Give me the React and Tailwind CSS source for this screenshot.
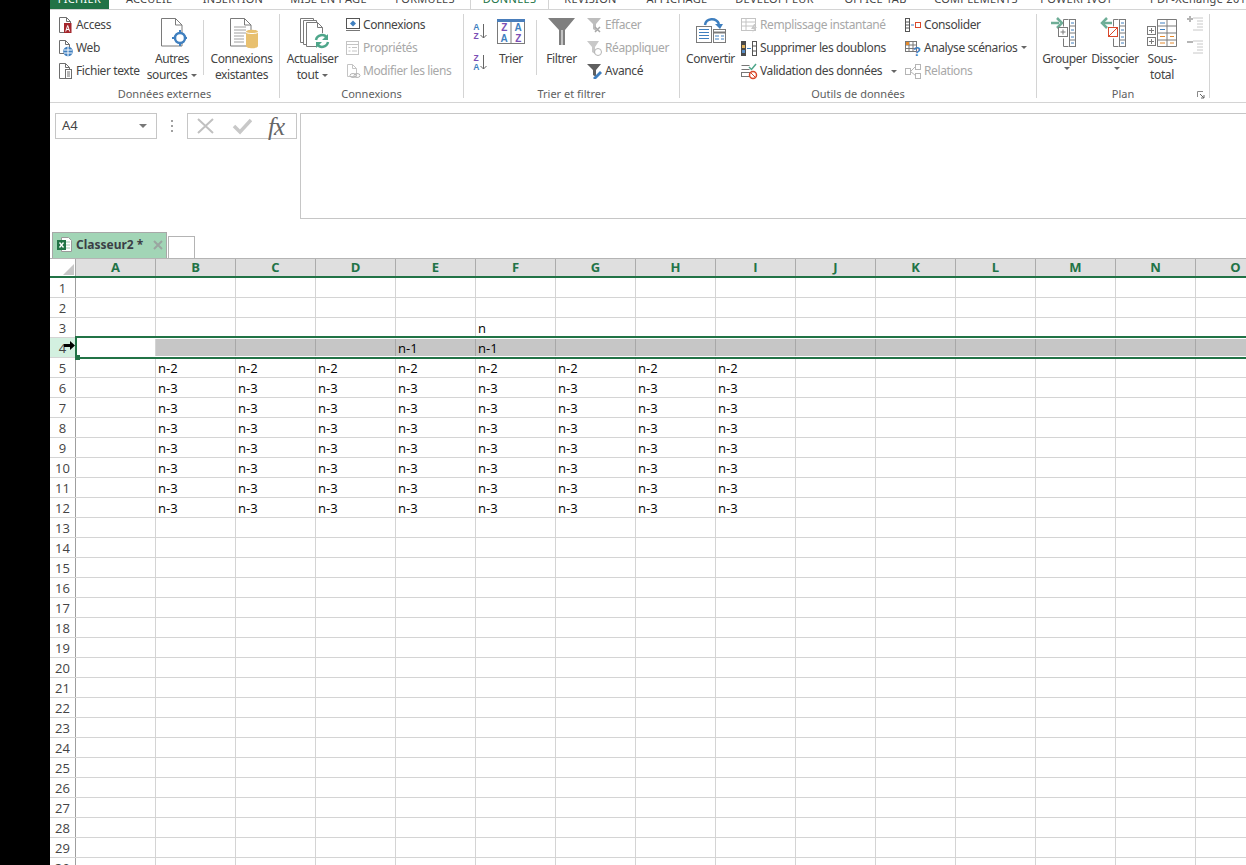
const FONT = { fontFamily: '"Noto Sans", "Open Sans", sans-serif' };

const TABS = [
  ["FICHIER", 59], ["ACCUEIL", 80], ["INSERTION", 88], ["MISE EN PAGE", 103], ["FORMULES", 90],
  ["DONNÉES", 79], ["RÉVISION", 83], ["AFFICHAGE", 90], ["DÉVELOPPEUR", 105], ["OFFICE TAB", 97],
  ["COMPLÉMENTS", 104], ["POWERPIVOT", 97], ["PDF-XChange 2012", 121],
];
const COLS = "ABCDEFGHIJKLMNO".split("");
const ROWS = Array.from({ length: 30 }, (_, i) => i + 1);

function cellText(r, c) {
  if (r === 3 && c === "F") return "n";
  if (r === 4 && (c === "E" || c === "F")) return "n-1";
  if (r >= 5 && r <= 12 && "BCDEFGHI".includes(c)) return r === 5 ? "n-2" : "n-3";
  return "";
}

const S = ({ w = 16, h = 16, children, className = "" }) => (
  <svg width={w} height={h} viewBox={`0 0 ${w} ${h}`} className={`shrink-0 ${className}`} fill="none">{children}</svg>
);

const Doc = ({ x = 0.5, y = 0.5, w = 10, h = 14, c = "#6e6e6e" }) => (
  <path d={`M${x} ${y}h${w - 4}l4 4v${h - 4}h-${w}z M${x + w - 4} ${y}v4h4`} stroke={c} fill="#fff" />
);

const IAccess = () => (<S h={18}><Doc x={1.5} y={1.5} w={11} h={15} /><rect x="6" y="7" width="7.5" height="10" fill="#a4262c" /><path d="M7.7 15.5l2-6 2 6M8.4 13.5h2.6" stroke="#fff" /></S>);
const IWeb = () => (<S h={18}><Doc x={1.5} y={1.5} w={10} h={13} /><circle cx="10" cy="12.5" r="4.8" fill="#3f7fbf" /><path d="M6 11h8M6 14h8M10 8v9" stroke="#fff" /></S>);
const IText = () => (<S h={18}><Doc x={1.5} y={1.5} w={10} h={15} /><rect x="7.5" y="7.5" width="6" height="9" fill="#fff" stroke="#6e6e6e" /><path d="M9 10h3M9 12h3M9 14h3" stroke="#6e6e6e" /></S>);
const IConn = () => (<S><rect x="1.5" y="1.5" width="13" height="10" fill="#fff" stroke="#555" /><path d="M8 3.5l3 3-3 3-3-3z" fill="#3f7fbf" /><path d="M1 13.5h14" stroke="#777" /></S>);
const IProps = () => (<S><rect x="1.5" y="1.5" width="12" height="13" stroke="#c4c4c4" /><path d="M1.5 4.5h12M3.5 7.5h2M7 7.5h5M3.5 11h2M7 11h5" stroke="#c4c4c4" /></S>);
const ILinks = () => (<S><Doc x={2.5} y={1.5} w={9} h={12} c="#c4c4c4" /><ellipse cx="8" cy="12.5" rx="3" ry="2" stroke="#b5b5b5" /><ellipse cx="12" cy="12.5" rx="3" ry="2" stroke="#b5b5b5" /></S>);
const IClear = () => (<S w={18}><path d="M1 1h14l-5 6v7l-3-2V7z" fill="#bdbdbd" /><path d="M9 10l5 5M14 10l-5 5" stroke="#a8a8a8" strokeWidth="1.5" /></S>);
const IReapply = () => (<S w={18}><path d="M1 1h12l-4 6v7l-3-2V7z" fill="#c8c8c8" /><circle cx="12" cy="12" r="3.5" stroke="#b5b5b5" /></S>);
const IAdv = () => (<S w={18}><path d="M1 1h14l-5 6v7l-3-2V7z" fill="#5f5f5f" /><path d="M7 15l7-7 2 2-7 7z" fill="#3f7fbf" /></S>);
const IFlash = () => (<S w={18}><rect x="0.5" y="1.5" width="14" height="12" stroke="#c4c4c4" /><path d="M0.5 5h14M0.5 9h14M5 1.5v12" stroke="#c4c4c4" /><path d="M13 7l-3 5h3l-2 4 5-6h-3l2-3z" fill="#c8c8c8" /></S>);
const IDup = () => (<S w={18}><rect x="0" y="1" width="5" height="15" fill="#4a4a4a" /><rect x="1" y="5" width="3" height="3" fill="#e3b35c" /><rect x="1" y="10" width="3" height="3" fill="#5a8fc7" /><rect x="11.5" y="1.5" width="4" height="14" stroke="#555" fill="#fff" /><path d="M12 6h3M12 11h3" stroke="#555" /><path d="M6 8.5h4" stroke="#3f7fbf" /></S>);
const IValid = () => (<S w={18} h={18}><path d="M0.5 3.5h8M0.5 7.5h8" stroke="#777" /><rect x="0.5" y="10.5" width="8" height="4" stroke="#777" /><path d="M8 5l2.5 2.5L15 2" stroke="#4ea68a" strokeWidth="1.5" /><circle cx="12" cy="13" r="3.5" stroke="#d9482b" strokeWidth="1.5" fill="#fff" /><path d="M9.5 10.5l5 5" stroke="#d9482b" /></S>);
const IConsol = () => (<S w={18}><rect x="0.5" y="1.5" width="4" height="13" stroke="#555" /><path d="M0.5 5h4M0.5 8h4M0.5 11h4" stroke="#555" /><path d="M6 8h3" stroke="#3f7fbf" /><rect x="10.5" y="5.5" width="5" height="5" stroke="#d9482b" /></S>);
const IScen = () => (<S w={18}><rect x="0.5" y="1.5" width="11" height="10" stroke="#777" /><path d="M0.5 5h11M0.5 8.5h11M4 1.5v10M8 1.5v10" stroke="#777" /><rect x="1" y="2" width="3" height="3" fill="#e58a2c" /><text x="8" y="16" fontSize="13" fontWeight="700" fill="#3f7fbf" fontFamily="Liberation Sans">?</text></S>);
const IRel = () => (<S w={18}><rect x="0.5" y="5.5" width="5" height="6" stroke="#b5b5b5" /><rect x="10.5" y="1.5" width="5" height="5" stroke="#b5b5b5" /><rect x="10.5" y="10.5" width="5" height="5" stroke="#b5b5b5" /><path d="M5.5 8.5l5-5M5.5 8.5l5 4" stroke="#b5b5b5" /></S>);

const Caret = ({ c = "#666" }) => <span className="inline-block align-middle ml-[4px] w-0 h-0 border-x-[3px] border-x-transparent border-t-[3px]" style={{ borderTopColor: c }} />;

const IAutres = () => (
  <S w={30} h={36}>
    <path d="M4.5 4.5h14l6.5 6.5v21h-20.5z M18.5 4.5v6.5h6.5" stroke="#7a7a7a" fill="#fff" />
    <circle cx="23" cy="24" r="5" fill="#fff" stroke="#3f7fbf" strokeWidth="2.5" />
    <path d="M15 24h4M27 24h3M23 16v4M23 28v4" stroke="#3f7fbf" strokeWidth="2" />
  </S>
);
const IExist = () => (
  <S w={34} h={36}>
    <path d="M5.5 4.5h14l6.5 6.5v21h-20.5z M19.5 4.5v6.5h6.5" stroke="#7a7a7a" fill="#fff" />
    <path d="M9 13h12M9 16h12M9 19h12M9 22h10M9 25h10M9 28h10" stroke="#a0a0a0" />
    <path d="M21 18c0-3 12-3 12 0v14c0 3-12 3-12 0z" fill="#e8c06f" />
    <path d="M21 18c0 2 12 2 12 0" stroke="#fff" />
  </S>
);
const IRefresh = () => (
  <S w={40} h={36}>
    <path d="M7.5 4.5h13v24h-13z" stroke="#7a7a7a" fill="#fff" />
    <path d="M10.5 6.5h13v24h-13z" stroke="#7a7a7a" fill="#fff" />
    <path d="M13.5 8.5h11l5 5v19h-16z M24.5 8.5v5h5" stroke="#7a7a7a" fill="#fff" />
    <circle cx="29" cy="27" r="8" fill="#fff" />
    <path d="M23 26a6 6 0 0 1 11-2M35 28a6 6 0 0 1-11 2" stroke="#4ea68a" strokeWidth="2.5" />
    <path d="M35 20v6h-6zM23 34v-6h6z" fill="#4ea68a" />
  </S>
);
const ILetters = ({ top, bottom, x, c1, c2 }) => (
  <g fontFamily="Liberation Sans" fontSize="10" fontWeight="700" textAnchor="middle">
    <text x={x} y="17" fill={c1}>{top}</text>
    <text x={x} y="28" fill={c2}>{bottom}</text>
  </g>
);
const ITrier = () => (
  <S w={30} h={36}>
    <rect x="1.5" y="5.5" width="27" height="24" stroke="#7a7a7a" fill="#fff" />
    <rect x="1" y="5" width="28" height="3" fill="#4a7ebb" />
    <path d="M15 8v21" stroke="#7a7a7a" />
    <ILetters x={8} top="Z" bottom="A" c1="#7b4fb5" c2="#3f7fbf" />
    <ILetters x={22} top="A" bottom="Z" c1="#3f7fbf" c2="#7b4fb5" />
  </S>
);
const ISort = ({ up }) => (
  <S w={17} h={20}>
    <g fontFamily="Liberation Sans" fontSize="8.5" fontWeight="700" textAnchor="middle">
      <text x="4" y="9" fill={up ? "#3f7fbf" : "#7b4fb5"}>{up ? "A" : "Z"}</text>
      <text x="4" y="18" fill={up ? "#7b4fb5" : "#3f7fbf"}>{up ? "Z" : "A"}</text>
    </g>
    <path d="M11.5 3v14M8.5 14l3 3 3-3" stroke="#666" />
  </S>
);
const IFunnel = () => (
  <S w={28} h={36}>
    <path d="M0 4h27L17 16v15h-6V16z" fill="#7f7f7f" />
    <path d="M14 16v15" stroke="#c4c4c4" strokeWidth="2" />
  </S>
);
const IConvert = () => (
  <S w={32} h={36}>
    <rect x="1.5" y="12.5" width="15" height="16" stroke="#7a7a7a" fill="#fff" />
    <path d="M4 15.5h10M4 18.5h10M4 21.5h10M4 24.5h10" stroke="#3f7fbf" />
    <rect x="18.5" y="15.5" width="12" height="13" stroke="#7a7a7a" fill="#fff" />
    <path d="M18.5 18.5h12" stroke="#7a7a7a" strokeWidth="2" />
    <path d="M20 22h4M26 22h3M20 25h4M26 25h3" stroke="#3f7fbf" />
    <path d="M10 11c1-7 11-8 14-1" stroke="#3f7fbf" strokeWidth="2.5" />
    <path d="M20 10h8l-3 5z" fill="#3f7fbf" />
  </S>
);
const ColRight = () => (
  <g>
    <rect x="16.5" y="5.5" width="6" height="27" stroke="#7a7a7a" fill="#fff" transform="translate(4 0)" />
    <path d="M20.5 12h6M20.5 19h6M20.5 26h6" stroke="#7a7a7a" />
    <path d="M22 9h3M22 16h3M22 23h3M22 29h3" stroke="#3f7fbf" />
    <path d="M19.5 5.5h-5v7M14.5 24.5v8h5" stroke="#7a7a7a" />
  </g>
);
const IGroup = () => (
  <S w={32} h={36}>
    <path d="M2 9h8" stroke="#6fae97" strokeWidth="2.5" /><path d="M8 4l5 5-5 5" stroke="#6fae97" strokeWidth="2.5" />
    <rect x="9.5" y="13.5" width="9" height="9" stroke="#7a7a7a" fill="#fff" /><path d="M11.5 18h5M14 15.5v5" stroke="#7a7a7a" />
    <ColRight />
  </S>
);
const IUngroup = () => (
  <S w={32} h={36}>
    <path d="M5 9h8" stroke="#6fae97" strokeWidth="2.5" /><path d="M8 4L3 9l5 5" stroke="#6fae97" strokeWidth="2.5" />
    <rect x="9.5" y="13.5" width="9" height="9" stroke="#d9482b" fill="#fff" /><path d="M10 22l8-8" stroke="#d9482b" />
    <ColRight />
  </S>
);
const ISubtotal = () => (
  <S w={32} h={36}>
    <path d="M11.5 5.5h19v27h-19z M11.5 12h19M11.5 19h19M11.5 26h19M21 5.5v27" stroke="#7a7a7a" />
    <rect x="1.5" y="12.5" width="8" height="8" stroke="#7a7a7a" fill="#fff" /><path d="M3 16.5h5M5.5 14v5" stroke="#7a7a7a" />
    <rect x="1.5" y="23.5" width="8" height="8" stroke="#7a7a7a" fill="#fff" /><path d="M3 27.5h5M5.5 25v5" stroke="#7a7a7a" />
    <path d="M14 9h5M14 15.5h5" stroke="#3f7fbf" />
    <path d="M14 22.5h5M24 22.5h4M14 29h5M24 29h4" stroke="#e58a2c" />
  </S>
);
const IOutline = ({ plus }) => (
  <S w={18}>
    <path d="M7 3h10M11 6h6M11 9h6M11 12h6M7 15h10" stroke="#c8c8c8" />
    <path d={plus ? "M1 4h6M4 1v6" : "M1 4h6"} stroke="#b5b5b5" strokeWidth="2" />
  </S>
);
const IExcel = () => (
  <S w={17} h={18}>
    <path d="M5.5 1.5h7l3 3v11h-10z" stroke="#9a9a9a" fill="#fff" />
    <path d="M9 6h5M9 9h5M9 12h5" stroke="#a0c7b0" />
    <rect x="1" y="4" width="9" height="10" fill="#217346" />
    <path d="M3.5 6.5l4 5M7.5 6.5l-4 5" stroke="#fff" strokeWidth="1.3" />
  </S>
);

const Small = ({ icon, label, off, caret, gap = 2 }) => (
  <div className={`flex items-center h-[23px] whitespace-nowrap ${off ? "text-[#a8a8a8]" : "text-[#444444]"}`}>
    <span className="w-[16px] h-[18px] flex items-center overflow-visible" style={{ marginRight: gap }}>{icon}</span>
    <span>{label}</span>
    {caret}
  </div>
);
const Big = ({ icon, w, lines, caret, children }) => (
  <div className="flex flex-col items-center text-[#444444] leading-[16px] shrink-0" style={{ width: w }}>
    <div className="h-[37px] flex justify-center">{icon}</div>
    {lines.map((l, i) => <div key={i} className="whitespace-nowrap h-[16px]">{l}{caret && i === lines.length - 1 ? <Caret /> : null}</div>)}
    {children}
  </div>
);
const Group = ({ w, label, children }) => (
  <div className="flex flex-col mt-[4px] shrink-0 relative" style={{ width: w }}>
    <div className="flex h-[72px]">{children}</div>
    <div className="h-[16px] leading-[16px] text-center text-[#5e5e5e] text-[11px] tracking-normal">{label}</div>
  </div>
);
const Sep = () => <div className="w-px h-[84px] mt-[4px] bg-[#d4d4d4] shrink-0" />;
const InnerSep = () => <div className="w-px h-[55px] mt-[6px] bg-[#d4d4d4] shrink-0" />;
const SmallCol = ({ className = "", children }) => <div className={`-mt-[1px] ${className}`}>{children}</div>;

function Ribbon() {
  return (
    <div className="flex h-[93px] border-b border-[#d4d4d4] text-[12px] tracking-[-0.4px] shrink-0">
      <Group w={229} label="Données externes">
        <SmallCol className="w-[98px] pl-[8px] shrink-0">
          <Small icon={<IAccess />} label="Access" />
          <Small icon={<IWeb />} label="Web" />
          <Small icon={<IText />} label="Fichier texte" />
        </SmallCol>
        <Big w={48} icon={<IAutres />} lines={["Autres", "sources"]} caret />
        <div className="w-[7px] shrink-0" />
        <InnerSep />
        <Big w={75} icon={<IExist />} lines={["Connexions", "existantes"]} />
      </Group>
      <Sep />
      <Group w={183} label="Connexions">
        <Big w={65} icon={<IRefresh />} lines={["Actualiser", "tout"]} caret />
        <SmallCol>
          <Small icon={<IConn />} label="Connexions" />
          <Small icon={<IProps />} label="Propriétés" off />
          <Small icon={<ILinks />} label="Modifier les liens" off />
        </SmallCol>
      </Group>
      <Sep />
      <Group w={215} label="Trier et filtrer">
        <div className="w-[24px] pl-[8px] pt-[7px] flex flex-col gap-[11px] shrink-0"><ISort up /><ISort /></div>
        <Big w={46} icon={<ITrier />} lines={["Trier"]} />
        <div className="w-[2px] shrink-0" />
        <InnerSep />
        <Big w={49} icon={<IFunnel />} lines={["Filtrer"]} />
        <SmallCol>
          <Small icon={<IClear />} label="Effacer" off gap={3} />
          <Small icon={<IReapply />} label="Réappliquer" off gap={3} />
          <Small icon={<IAdv />} label="Avancé" gap={3} />
        </SmallCol>
      </Group>
      <Sep />
      <Group w={356} label="Outils de données">
        <Big w={61} icon={<IConvert />} lines={["Convertir"]} />
        <SmallCol className="w-[164px] shrink-0">
          <Small icon={<IFlash />} label="Remplissage instantané" off gap={3} />
          <Small icon={<IDup />} label="Supprimer les doublons" gap={3} />
          <Small icon={<IValid />} label="Validation des données" gap={3} caret={<span className="ml-[5px]"><Caret /></span>} />
        </SmallCol>
        <SmallCol>
          <Small icon={<IConsol />} label="Consolider" gap={3} />
          <Small icon={<IScen />} label="Analyse scénarios" gap={3} caret={<Caret />} />
          <Small icon={<IRel />} label="Relations" off gap={3} />
        </SmallCol>
      </Group>
      <Sep />
      <Group w={172} label="Plan">
        <Big w={55} icon={<IGroup />} lines={["Grouper"]}><Caret /></Big>
        <Big w={46} icon={<IUngroup />} lines={["Dissocier"]}><Caret /></Big>
        <Big w={48} icon={<ISubtotal />} lines={["Sous-", "total"]} />
        <div className="pt-[1px] flex flex-col gap-[7px]"><IOutline plus /><IOutline /></div>
        <svg width="8" height="8" viewBox="0 0 8 8" fill="none" className="absolute right-[4px] bottom-[3px]">
          <path d="M0.5 6V0.5H6" stroke="#8a8a8a" /><path d="M3 3l4 4M7 4v3H4" stroke="#666" />
        </svg>
      </Group>
      <Sep />
    </div>
  );
}

function FormulaBar() {
  return (
    <div className="flex items-start h-[128px] pt-[10px] pl-[5px] shrink-0">
      <div className="w-[102px] h-[26px] border border-[#c6c6c6] flex items-center justify-between pl-[6px] pr-[9px] text-[13px] text-[#444444]">
        <span>A4</span>
        <span className="w-0 h-0 border-x-[4px] border-x-transparent border-t-[4px] border-t-[#777777]" />
      </div>
      <div className="w-[30px] h-[26px] flex flex-col items-center justify-center gap-[3px]">
        <span className="w-[2px] h-[2px] bg-[#a0a0a0]" /><span className="w-[2px] h-[2px] bg-[#a0a0a0]" /><span className="w-[2px] h-[2px] bg-[#a0a0a0]" />
      </div>
      <div className="w-[110px] h-[26px] border border-[#c6c6c6] flex items-center relative">
        <svg width="20" height="18" viewBox="0 0 20 18" fill="none" className="ml-[8px]"><path d="M2 2l15 14M17 2L2 16" stroke="#c0c0c0" strokeWidth="2" /></svg>
        <svg width="20" height="18" viewBox="0 0 20 18" fill="none" className="ml-[16px]"><path d="M2 9l6 6L19 3" stroke="#c8c8c8" strokeWidth="3.5" /></svg>
        <span className="ml-[16px] text-[25px] leading-none italic text-[#666666] tracking-[-1px]" style={{ fontFamily: '"Liberation Serif", serif' }}>fx</span>
      </div>
      <div className="ml-[3px] flex-1 h-[106px] border border-[#c6c6c6] border-r-0" />
    </div>
  );
}

function SheetTabs() {
  return (
    <div className="flex items-end h-[27px] pl-[2px] shrink-0">
      <div className="w-[115px] h-[26px] bg-[#a2d5b6] border border-b-0 border-[#a8a8a8] flex items-center pl-[3px] pb-[1px] gap-[3px]">
        <IExcel />
        <span className="text-[12px] font-bold text-[#3b3f46]">Classeur2 *</span>
        <svg width="10" height="10" viewBox="0 0 10 10" fill="none" className="ml-[7px]"><path d="M1 1l8 8M9 1l-8 8" stroke="#9aa5a0" strokeWidth="2" /></svg>
      </div>
      <div className="ml-px w-[27px] h-[22px] border border-b-0 border-[#b4b4b4] bg-white" />
    </div>
  );
}

function Grid() {
  return (
    <div className="relative flex-1 overflow-hidden border-t border-[#b4b4b4]" style={{ fontFamily: '"Open Sans", sans-serif' }}>
      <div className="flex h-[17px] bg-[#dfdfdf]">
        <div className="w-[26px] bg-white flex items-end justify-end shrink-0 pr-[1px] pb-[1px] border-r border-[#a8a8a8]">
          <span className="w-0 h-0 border-l-[11px] border-l-transparent border-b-[11px] border-b-[#c6c6c6]" />
        </div>
        {COLS.map((c) => (
          <div key={c} className="w-[80px] shrink-0 text-center text-[13px] font-bold leading-[17px] text-[#217346] border-r border-[#ababab]">{c}</div>
        ))}
      </div>
      <div className="h-[2px] bg-[#217346]" />
      {ROWS.map((r) => {
        const sel = r === 4;
        return (
          <div key={r} className="flex h-[20px] border-b border-[#d4d4d4]">
            <div className={`w-[26px] shrink-0 text-center text-[13px] leading-[20px] text-[#444444] border-r border-[#9f9f9f] ${sel ? "bg-[#d3f0e0] text-[#217346]" : ""}`}>{r}</div>
            {COLS.map((c, i) => (
              <div key={c} className={`w-[80px] shrink-0 pl-[2px] text-[13px] leading-[20px] text-black border-r ${sel && i > 0 ? "bg-[#c6c6c6] border-[#a8a8a8]" : "border-[#d4d4d4]"}`}>{cellText(r, c)}</div>
            ))}
          </div>
        );
      })}
      <div className="absolute left-[25px] right-0 top-[77px] h-[23px] border-y-2 border-l-2 border-[#217346]">
        <div className="h-full border-y border-white" />
      </div>
      <div className="absolute left-[25px] top-[96px] w-[5px] h-[5px] bg-[#217346]" />
      <svg width="11" height="9" viewBox="0 0 11 9" className="absolute left-[14px] top-[82px]"><path d="M0 3h6V0l5 4.5L6 9V6H0z" fill="#000" /></svg>
    </div>
  );
}

export default function App() {
  return (
    <div className="flex w-[1246px] h-[865px] overflow-hidden bg-white" style={FONT}>
      <div className="w-[50px] bg-black shrink-0" />
      <div className="flex-1 min-w-0 flex flex-col">
        <div className="h-[10px] overflow-hidden flex border-b border-[#d4d4d4] shrink-0">
          {TABS.map(([t, w], i) => (
            <div key={t} className={`shrink-0 h-[10px] overflow-hidden ${i === 12 ? "pl-[25px]" : "text-center"} ${i === 0 ? "bg-[#217346] text-white" : i === 5 ? "bg-white text-[#217346] border-x border-[#d4d4d4]" : "text-[#444444]"}`} style={{ width: w }}>
              <div className="text-[11px] leading-[16px] -mt-[9px] whitespace-nowrap tracking-[0.3px]">{t}</div>
            </div>
          ))}
        </div>
        <Ribbon />
        <FormulaBar />
        <SheetTabs />
        <Grid />
      </div>
    </div>
  );
}
